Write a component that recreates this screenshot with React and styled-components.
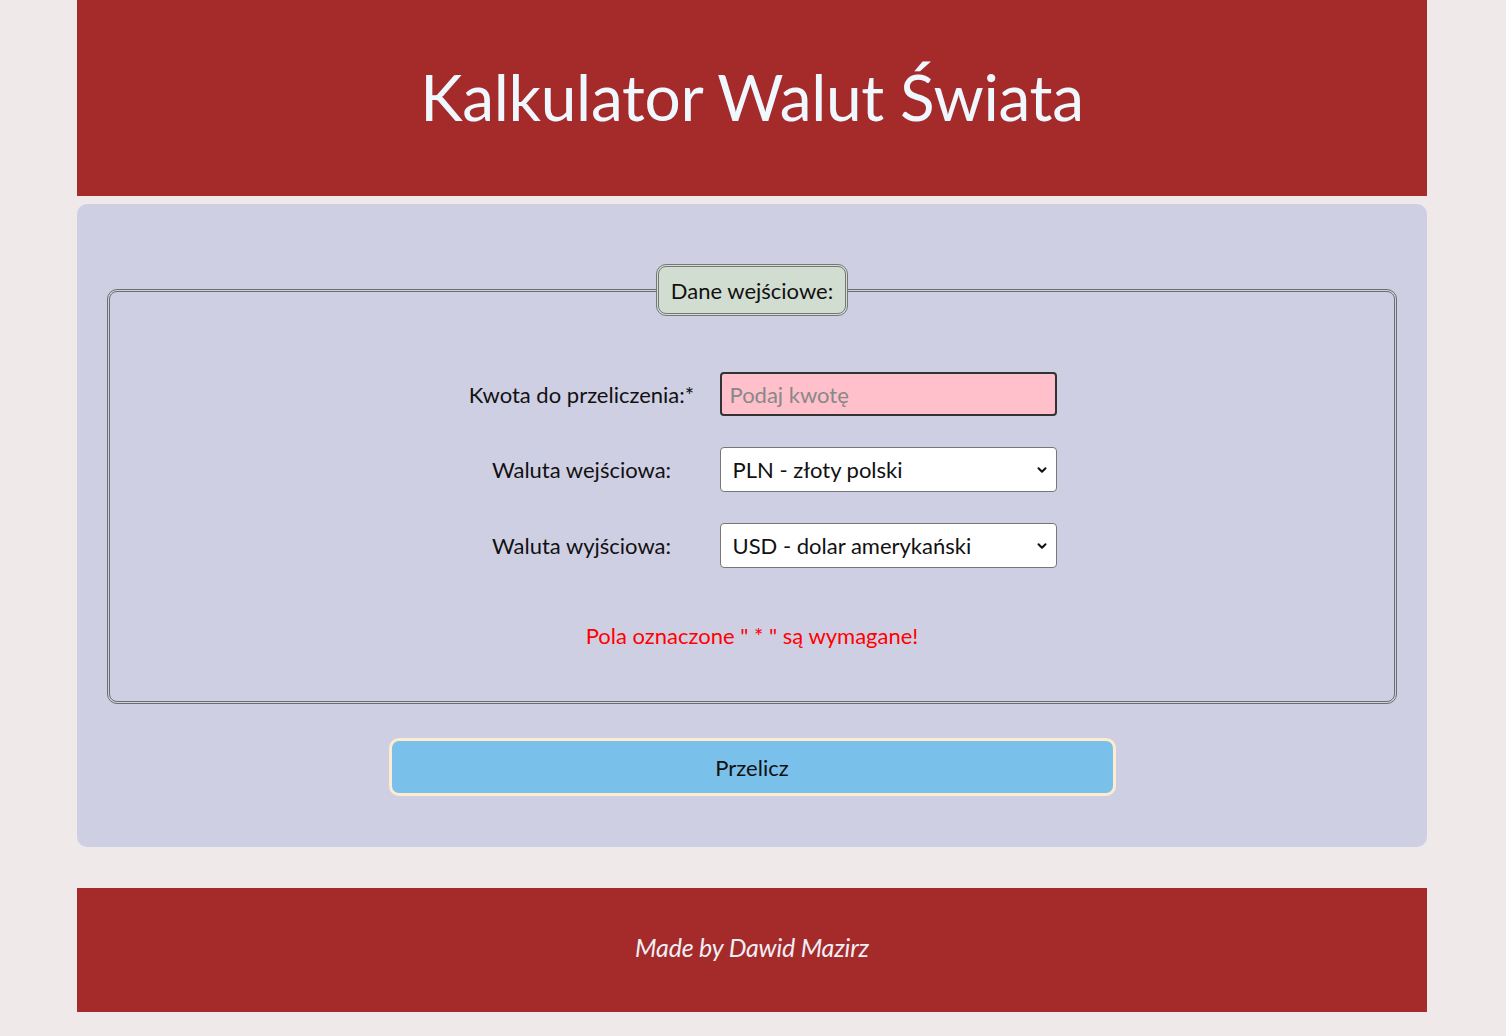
import React from "react";
import styled, { createGlobalStyle } from "styled-components";
import { ChevronDown } from "lucide-react";

const GlobalStyle = createGlobalStyle`
  * {
    box-sizing: border-box;
  }
  body {
    margin: 0;
    background-color: #f0e9e9;
    font-family: Lato, "Noto Sans", sans-serif;
  }
`;

const currencies = [
  { value: "PLN", name: "PLN - złoty polski" },
  { value: "USD", name: "USD - dolar amerykański" },
  { value: "EUR", name: "EUR - euro" },
];

const CurrencySelect = ({ id, defaultValue }) => (
  <SelectWrapper>
    <Select id={id} defaultValue={defaultValue}>
      {currencies.map((currency) => (
        <option key={currency.value} value={currency.value}>
          {currency.name}
        </option>
      ))}
    </Select>
    <Arrow size={14} strokeWidth={3.5} />
  </SelectWrapper>
);

const App = () => {
  return (
    <>
      <GlobalStyle />
      <Container>
        <Header>
          <Title>Kalkulator Walut Świata</Title>
        </Header>
        <Main>
          <form onSubmit={(e) => e.preventDefault()}>
            <Fieldset>
              <Legend>Dane wejściowe:</Legend>
              <FormGrid>
                <Label htmlFor="amount">Kwota do przeliczenia:*</Label>
                <AmountInput id="amount" type="number" placeholder="Podaj kwotę" />
                <Label htmlFor="from">Waluta wejściowa:</Label>
                <CurrencySelect id="from" defaultValue="PLN" />
                <Label htmlFor="to">Waluta wyjściowa:</Label>
                <CurrencySelect id="to" defaultValue="USD" />
              </FormGrid>
              <Info>Pola oznaczone " * " są wymagane!</Info>
            </Fieldset>
            <Button>Przelicz</Button>
          </form>
        </Main>
        <Footer>Made by Dawid Mazirz</Footer>
      </Container>
    </>
  );
};

export default App;

const Container = styled.div`
  max-width: 1350px;
  margin: 0 auto;
  transform: translateX(-1px);
`;
const Header = styled.header`
  background-color: brown;
  height: 196px;
  display: flex;
  align-items: center;
  justify-content: center;
`;
const Title = styled.h1`
  margin: 0;
  color: aliceblue;
  font-size: 64px;
  font-weight: 400;
  letter-spacing: -0.3px;
  padding-bottom: 4px;
`;
const Main = styled.main`
  margin-top: 8px;
  background-color: #cfcfe4;
  border-radius: 10px;
  padding: 60px 30px 51px;
`;
const Fieldset = styled.fieldset`
  margin: 0;
  border: 3px double #6e6e6e;
  border-radius: 10px;
  padding: 56px 20px 52px;
`;
const Legend = styled.legend`
  margin: 0 auto;
  background-color: #d1ddd0;
  border: 3px double #777;
  border-radius: 10px;
  padding: 10px 12px 9px;
  font-size: 22px;
  color: #111;
`;
const FormGrid = styled.div`
  display: grid;
  grid-template-columns: 276px 337px;
  row-gap: 31px;
  justify-content: center;
  align-items: center;
  margin-left: -4px;
`;
const Label = styled.label`
  text-align: center;
  font-size: 22px;
  color: #111;
`;
const AmountInput = styled.input`
  height: 44px;
  background-color: pink;
  border: 2px solid #333;
  border-radius: 4px;
  padding: 0 8px;
  font-family: inherit;
  font-size: 22px;
  &::placeholder {
    color: #888;
  }
`;
const SelectWrapper = styled.div`
  position: relative;
  height: 45px;
`;
const Select = styled.select`
  appearance: none;
  width: 100%;
  height: 100%;
  background-color: #fff;
  border: 1px solid #777;
  border-radius: 4px;
  padding: 0 36px 0 12px;
  font-family: inherit;
  font-size: 22px;
  color: #111;
`;
const Arrow = styled(ChevronDown)`
  position: absolute;
  right: 8px;
  top: 50%;
  transform: translateY(-50%);
  color: #111;
  pointer-events: none;
`;
const Info = styled.p`
  margin: 54px 0 0;
  text-align: center;
  color: red;
  font-size: 22px;
`;
const Button = styled.button`
  display: block;
  width: 727px;
  height: 58px;
  margin: 34px auto 0;
  background-color: #79c0ea;
  border: 3px solid #ffebcd;
  border-radius: 10px;
  font-family: inherit;
  font-size: 22px;
  color: #111;
`;
const Footer = styled.footer`
  margin-top: 41px;
  height: 124px;
  background-color: brown;
  display: flex;
  align-items: center;
  justify-content: center;
  color: #f0eef5;
  font-size: 25px;
  font-style: italic;
  letter-spacing: -0.2px;
  padding-bottom: 6px;
`;
